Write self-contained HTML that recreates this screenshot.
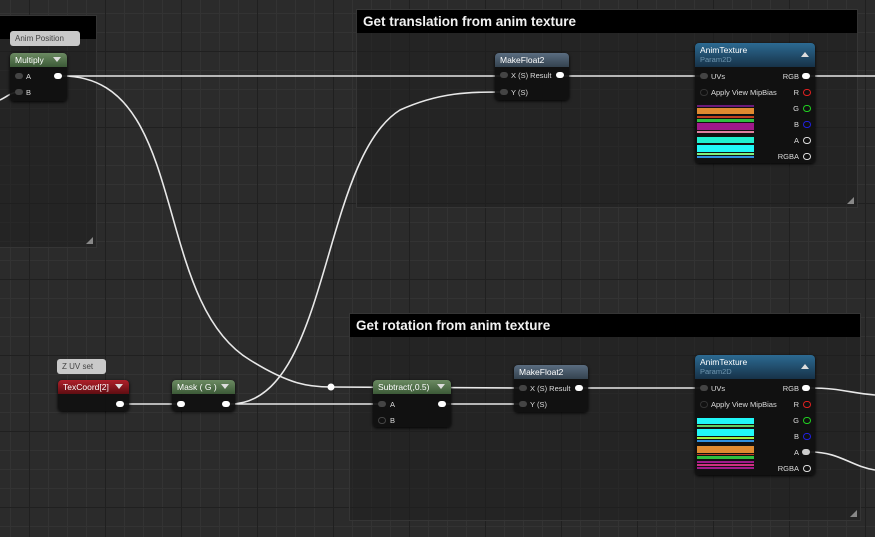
<!DOCTYPE html>
<html><head><meta charset="utf-8"><style>
*{margin:0;padding:0;box-sizing:border-box}
body{width:875px;height:537px;overflow:hidden;position:relative;font-family:"Liberation Sans",sans-serif;
background-color:#2b2b2b;
background-image:
linear-gradient(to right,#202020 0,#202020 1px,transparent 1px),
linear-gradient(to bottom,#202020 0,#202020 1px,transparent 1px),
linear-gradient(to right,#333 0,#333 1px,transparent 1px),
linear-gradient(to bottom,#333 0,#333 1px,transparent 1px);
background-size:76px 76px,76px 76px,19px 19px,19px 19px;
background-position:29px 0,0 51px,10px 0,0 13px;}
.cm{position:absolute;background:rgba(30,30,30,.5);border:1px solid #353535}
.cm .h{position:absolute;left:0;top:0;right:0;height:23px;background:#000;color:#f2f2f2;font-weight:bold;font-size:13.5px;padding:4px 6px}
.grip{position:absolute;right:3px;bottom:3px;width:0;height:0;border-left:7px solid transparent;border-bottom:7px solid #888}
.n{position:absolute;background:rgba(16,16,16,.93);border-radius:4px;box-shadow:0 1px 3px #000;color:#ddd;font-size:8px}
.n .t{height:14px;border-radius:4px 4px 0 0;color:#fff;font-size:8.5px;padding:2px 5px;position:relative}
.g{background:linear-gradient(#6b8a62,#3c5a37)}
.b{background:linear-gradient(#5a6c80,#34424f)}
.r{background:linear-gradient(#b0202a,#5e0d12)}
.tx{background:linear-gradient(#2c6a92,#173248);height:24px!important}
.arr{position:absolute;right:6px;top:4px;width:0;height:0;border-left:4px solid transparent;border-right:4px solid transparent;border-top:5px solid #ddd}
.up{border-top:0;border-bottom:5px solid #ddd;top:9px}
.p{position:absolute;font-size:7.5px;color:#ddd;white-space:nowrap}
.pin{position:absolute;width:8px;height:6px;border-radius:3px;background:#444}
.po{position:absolute;width:8px;height:6px;border-radius:3px;background:#fff}
.ring{position:absolute;width:8px;height:7px;border-radius:4px;border:1.5px solid #ddd;background:transparent}
.bub{position:absolute;background:#c9c9c9;color:#444;font-size:8px;border-radius:3px;padding:3px 5px}
.sw{position:absolute;left:2px;width:57px}
</style></head><body>

<div class="cm" style="left:-2px;top:15px;width:99px;height:233px"><div class="h" style="height:23px"></div><div class="grip"></div></div>
<div class="cm" style="left:356px;top:9px;width:502px;height:199px"><div class="h">Get translation from anim texture</div><div class="grip"></div></div>
<div class="cm" style="left:349px;top:313px;width:512px;height:208px"><div class="h">Get rotation from anim texture</div><div class="grip"></div></div>

<svg width="875" height="537" style="position:absolute;left:0;top:0" fill="none" stroke="#e8e8e8" stroke-width="1.6">
<path d="M62 76 L503 76"/>
<path d="M562 76 L703 76"/>
<path d="M810 76 L875 76"/>
<path d="M0 100 C8 96 10 93 18 92"/>
<path d="M62 76 C190 76 150 300 250 360 C290 385 310 387 331 387 L522 388"/>
<path d="M122 404 L180 404"/>
<path d="M230 404 L381 404"/>
<path d="M230 404 C330 404 320 160 400 110 C440 92 470 92 503 92"/>
<path d="M444 404 L522 404"/>
<path d="M580 388 L703 388"/>
<path d="M810 388 C840 388 850 393 875 395"/>
<path d="M810 452 C840 452 850 466 875 470"/>
<circle cx="331" cy="387" r="3.5" fill="#fff" stroke="none"/>
</svg>

<div class="bub" style="left:10px;top:31px;width:70px">Anim Position</div>
<div class="n" style="left:10px;top:53px;width:57px;height:48px"><div class="t g">Multiply<span class="arr"></span></div>
<div class="pin" style="left:5px;top:20px"></div><div class="p" style="left:16px;top:19px">A</div>
<div class="pin" style="left:5px;top:36px"></div><div class="p" style="left:16px;top:35px">B</div>
<div class="po" style="left:44px;top:20px"></div></div>

<div class="n" style="left:495px;top:53px;width:74px;height:47px"><div class="t b">MakeFloat2</div>
<div class="pin" style="left:5px;top:19px"></div><div class="p" style="left:16px;top:18px">X (S) Result</div><div class="po" style="left:61px;top:19px"></div>
<div class="pin" style="left:5px;top:36px"></div><div class="p" style="left:16px;top:35px">Y (S)</div></div>

<div class="n" style="left:695px;top:43px;width:120px;height:120px"><div class="t tx">AnimTexture<div style="color:#6f95ae;font-size:7.5px">Param2D</div><span class="arr up"></span></div>
<div class="pin" style="left:5px;top:30px"></div><div class="p" style="left:16px;top:29px">UVs</div>
<div class="ring" style="left:5px;top:46px;border-color:#333"></div><div class="p" style="left:16px;top:45px">Apply View MipBias</div>
<div class="p" style="right:16px;top:29px">RGB</div><div class="po" style="right:5px;top:30px"></div>
<div class="p" style="right:16px;top:45px">R</div><div class="ring" style="right:4px;top:46px;border-color:#e02020"></div>
<div class="p" style="right:16px;top:61px">G</div><div class="ring" style="right:4px;top:62px;border-color:#20d020"></div>
<div class="p" style="right:16px;top:77px">B</div><div class="ring" style="right:4px;top:78px;border-color:#2020e0"></div>
<div class="p" style="right:16px;top:93px">A</div><div class="ring" style="right:4px;top:94px"></div>
<div class="p" style="right:16px;top:109px">RGBA</div><div class="ring" style="right:4px;top:110px"></div>
<div class="sw" style="top:62px;height:2px;background:#6a1a7a"></div>
<div class="sw" style="top:65px;height:6px;background:#e08a30"></div>
<div class="sw" style="top:73px;height:2px;background:#c04020"></div>
<div class="sw" style="top:76px;height:3px;background:#30c040"></div>
<div class="sw" style="top:80px;height:7px;background:#a01a8a"></div>
<div class="sw" style="top:88px;height:2px;background:#e080a0"></div>
<div class="sw" style="top:94px;height:6px;background:#20f0d0"></div>
<div class="sw" style="top:102px;height:7px;background:#20f8f8"></div>
<div class="sw" style="top:110px;height:2px;background:#80f080"></div>
<div class="sw" style="top:113px;height:2px;background:#3090e0"></div></div>

<div class="bub" style="left:57px;top:359px;width:49px">Z UV set</div>
<div class="n" style="left:58px;top:380px;width:71px;height:31px"><div class="t r">TexCoord[2]<span class="arr"></span></div><div class="po" style="left:58px;top:21px"></div></div>
<div class="n" style="left:172px;top:380px;width:63px;height:31px"><div class="t g">Mask ( G )<span class="arr"></span></div><div class="po" style="left:5px;top:21px"></div><div class="po" style="left:50px;top:21px"></div></div>
<div class="n" style="left:373px;top:380px;width:78px;height:47px"><div class="t g">Subtract(,0.5)<span class="arr"></span></div>
<div class="pin" style="left:5px;top:21px"></div><div class="p" style="left:17px;top:20px">A</div>
<div class="ring" style="left:5px;top:37px;border-color:#444"></div><div class="p" style="left:17px;top:36px">B</div>
<div class="po" style="left:65px;top:21px"></div></div>

<div class="n" style="left:514px;top:365px;width:74px;height:47px"><div class="t b">MakeFloat2</div>
<div class="pin" style="left:5px;top:20px"></div><div class="p" style="left:16px;top:19px">X (S) Result</div><div class="po" style="left:61px;top:20px"></div>
<div class="pin" style="left:5px;top:36px"></div><div class="p" style="left:16px;top:35px">Y (S)</div></div>

<div class="n" style="left:695px;top:355px;width:120px;height:120px"><div class="t tx">AnimTexture<div style="color:#6f95ae;font-size:7.5px">Param2D</div><span class="arr up"></span></div>
<div class="pin" style="left:5px;top:30px"></div><div class="p" style="left:16px;top:29px">UVs</div>
<div class="ring" style="left:5px;top:46px;border-color:#333"></div><div class="p" style="left:16px;top:45px">Apply View MipBias</div>
<div class="p" style="right:16px;top:29px">RGB</div><div class="po" style="right:5px;top:30px"></div>
<div class="p" style="right:16px;top:45px">R</div><div class="ring" style="right:4px;top:46px;border-color:#e02020"></div>
<div class="p" style="right:16px;top:61px">G</div><div class="ring" style="right:4px;top:62px;border-color:#20d020"></div>
<div class="p" style="right:16px;top:77px">B</div><div class="ring" style="right:4px;top:78px;border-color:#2020e0"></div>
<div class="p" style="right:16px;top:93px">A</div><div class="po" style="right:5px;top:94px;background:#ccc"></div>
<div class="p" style="right:16px;top:109px">RGBA</div><div class="ring" style="right:4px;top:110px"></div>
<div class="sw" style="top:63px;height:6px;background:#20f8f8"></div>
<div class="sw" style="top:70px;height:2px;background:#60d060"></div>
<div class="sw" style="top:74px;height:7px;background:#20f8f8"></div>
<div class="sw" style="top:82px;height:2px;background:#a0f040"></div>
<div class="sw" style="top:85px;height:2px;background:#3090e0"></div>
<div class="sw" style="top:91px;height:7px;background:#e08a30"></div>
<div class="sw" style="top:99px;height:1px;background:#c04020"></div>
<div class="sw" style="top:101px;height:3px;background:#30c040"></div>
<div class="sw" style="top:106px;height:2px;background:#a01a8a"></div>
<div class="sw" style="top:109px;height:2px;background:#d03080"></div>
<div class="sw" style="top:112px;height:2px;background:#a01a8a"></div></div>

</body></html>
